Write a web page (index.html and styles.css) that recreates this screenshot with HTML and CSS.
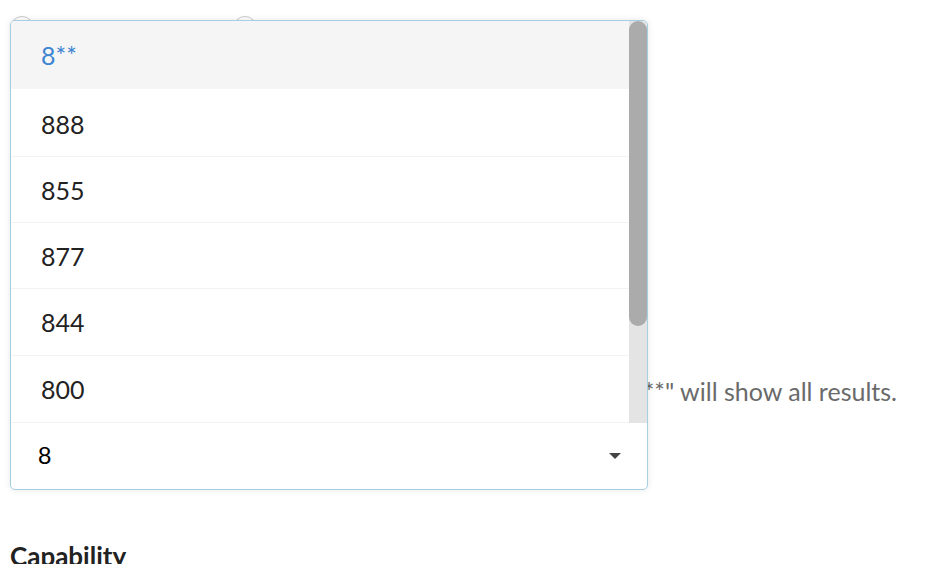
FILE: index.html
```html
<!DOCTYPE html>
<html lang="en">
<head>
  <meta charset="UTF-8">
  <title>Number Search</title>
  <link rel="stylesheet" href="styles.css">
</head>
<body>
  <form class="page">
    <!-- Number type radios (covered by the open picker) -->
    <div class="radio-row">
      <label class="radio"><span class="radio-dot"></span>Local</label>
      <label class="radio"><span class="radio-dot"></span>Toll-free</label>
    </div>

    <div class="field-spacer"></div>

    <p class="hint">Choose a prefix from the list. Entering "8**" will show all results.</p>

    <h3 class="section-title">Capability</h3>

    <!-- Open prefix picker -->
    <div class="picker">
      <div class="picker-body">
        <ul class="picker-list">
          <li class="picker-option is-active">8**</li>
          <li class="picker-option">888</li>
          <li class="picker-option">855</li>
          <li class="picker-option">877</li>
          <li class="picker-option">844</li>
          <li class="picker-option">800</li>
        </ul>
        <div class="scrollbar">
          <div class="scrollbar-thumb"></div>
        </div>
      </div>
      <div class="picker-input">
        <span>8</span>
        <span class="caret"></span>
      </div>
    </div>
  </form>
</body>
</html>
```

FILE: styles.css
```css
/* Reset & Basic Styling */
* {
  box-sizing: border-box;
  margin: 0;
  padding: 0;
}
body {
  font-family: 'Lato', 'Noto Sans', sans-serif;
  background: #fff;
  color: #222;
}
.page {
  position: relative;
  padding: 16px 10px 0;
  height: 564px;
  overflow: hidden;
}
/* Radios */
.radio-row {
  display: flex;
  gap: 70px;
}
.radio {
  display: flex;
  align-items: center;
  gap: 10px;
  width: 153px;
  font-size: 20px;
  color: #333;
}
.radio-dot {
  width: 24px;
  height: 24px;
  border: 1px solid #c8c8c8;
  border-radius: 50%;
}
.field-spacer {
  height: 335px;
}
/* Hint */
.hint {
  font-size: 25px;
  color: #6a6a6a;
  line-height: 32px;
  text-align: right;
  padding-right: 25px;
  white-space: nowrap;
}
.section-title {
  margin-top: 133px;
  font-size: 26px;
  font-weight: 700;
  color: #222;
}
/* Picker */
.picker {
  position: absolute;
  top: 20px;
  left: 10px;
  width: 638px;
  background: #fff;
  border: 1px solid #a6cfe2;
  border-radius: 5px;
  box-shadow: 0 0 6px rgba(0, 0, 0, 0.1);
  overflow: hidden;
}
.picker-body {
  display: flex;
  height: 402px;
}
.picker-list {
  list-style: none;
  flex: 1;
}
.picker-option {
  display: flex;
  align-items: center;
  height: 67px;
  padding-left: 30px;
  border-bottom: 1px solid #f3f3f3;
  font-size: 25px;
  color: #222;
}
.picker-option.is-active {
  height: 68px;
  background: #f5f5f5;
  color: #3d84d2;
  border-bottom-color: #f5f5f5;
}
.picker-option:nth-child(2) {
  height: 68px;
  padding-top: 2px;
}
.picker-option:nth-child(3),
.picker-option:nth-child(4) {
  height: 66px;
}
.scrollbar {
  width: 18px;
  background: #e4e4e4;
}
.scrollbar-thumb {
  height: 305px;
  background: #ababab;
  border-radius: 9px;
}
.picker-input {
  display: flex;
  align-items: center;
  justify-content: space-between;
  height: 66px;
  padding: 0 26px 0 27px;
  font-family: 'Liberation Sans', Arial, sans-serif;
  font-size: 24px;
  color: #000;
}
.caret {
  width: 0;
  height: 0;
  border-left: 6px solid transparent;
  border-right: 6px solid transparent;
  border-top: 6px solid #444;
}
```
